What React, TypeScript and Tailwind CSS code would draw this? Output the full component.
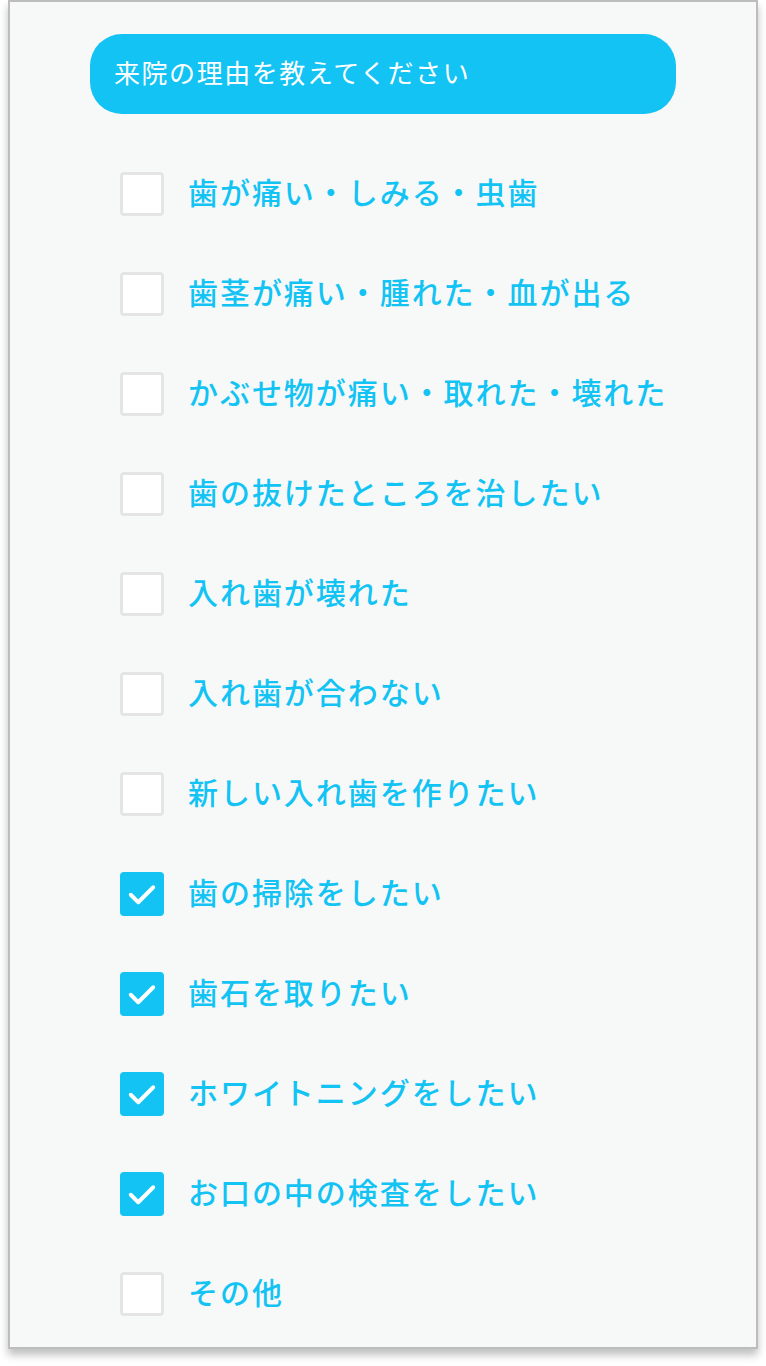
import { useState } from "react";

const reasons = [
  "歯が痛い・しみる・虫歯",
  "歯茎が痛い・腫れた・血が出る",
  "かぶせ物が痛い・取れた・壊れた",
  "歯の抜けたところを治したい",
  "入れ歯が壊れた",
  "入れ歯が合わない",
  "新しい入れ歯を作りたい",
  "歯の掃除をしたい",
  "歯石を取りたい",
  "ホワイトニングをしたい",
  "お口の中の検査をしたい",
  "その他",
];

const initialChecked = [false, false, false, false, false, false, false, true, true, true, true, false];

export default function App() {
  const [checked, setChecked] = useState<boolean[]>(initialChecked);

  const toggle = (i: number) =>
    setChecked((prev) => prev.map((v, j) => (j === i ? !v : v)));

  return (
    <div
      className="min-h-[1366px] w-[766px] bg-white pl-2 pr-2 pt-0"
      style={{ fontFamily: '"Noto Sans CJK JP", "Noto Sans", sans-serif' }}
    >
      <div className="h-[1349px] w-[750px] border-2 border-[#bdbdbd] bg-[#f7f9f9] shadow-[0_6px_8px_rgba(0,0,0,0.25)]">
        <div className="ml-[80px] mt-[32px] flex h-[80px] w-[586px] items-center rounded-[32px] bg-[#12c3f3] pb-[4px] pl-[24px]">
          <span className="text-[26px] leading-none tracking-[0.06em] text-white">来院の理由を教えてください</span>
        </div>

        <ul className="mt-[58px] flex flex-col gap-[56px] pl-[110px]">
          {reasons.map((label, i) => (
            <li key={label}>
              <label className="flex h-[44px] cursor-pointer items-center gap-[24px]">
                <input
                  type="checkbox"
                  className="sr-only"
                  checked={checked[i]}
                  onChange={() => toggle(i)}
                />
                {checked[i] ? (
                  <span className="flex h-[44px] w-[44px] items-center justify-center rounded-[4px] bg-[#12c3f3]">
                    <svg viewBox="0 0 24 24" className="h-[36px] w-[36px]" fill="none" stroke="white" strokeWidth={2.6} strokeLinecap="round" strokeLinejoin="round">
                      <path d="M4.5 12.5l5 5L19.5 7.5" />
                    </svg>
                  </span>
                ) : (
                  <span className="h-[44px] w-[44px] rounded-[4px] border-[3px] border-[#e5e5e5] bg-white" />
                )}
                <span className="pb-[7px] text-[30px] font-medium leading-none tracking-[0.065em] text-[#12c3f3]">{label}</span>
              </label>
            </li>
          ))}
        </ul>
      </div>
    </div>
  );
}
